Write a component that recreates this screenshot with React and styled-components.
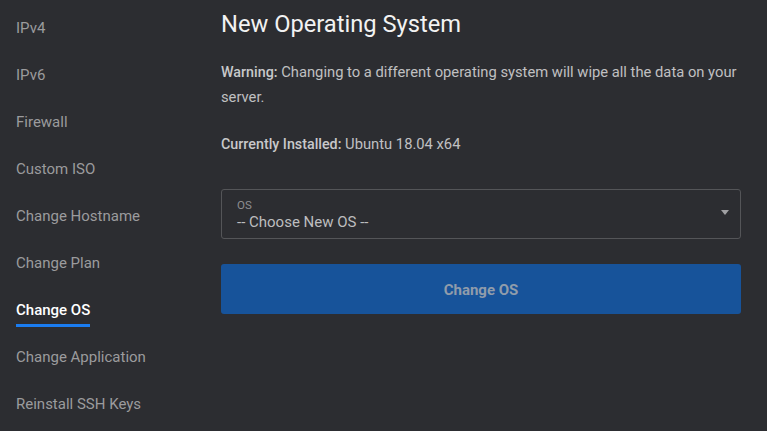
import React from "react";
import styled, { createGlobalStyle } from "styled-components";

const Global = createGlobalStyle`
  html, body { margin: 0; padding: 0; background: #2c2d31; }
  body { font-family: Roboto, "Noto Sans", sans-serif; -webkit-font-smoothing: antialiased; }
`;

const Page = styled.div`
  display: grid;
  grid-template-columns: 221px 520px;
  height: 431px;
  overflow: hidden;
  background: #2c2d31;
`;

const Sidebar = styled.nav`
  display: flex;
  flex-direction: column;
  padding-top: 4px;
  padding-left: 16px;
`;

const NavItem = styled.div`
  height: 47px;
  display: flex;
  align-items: center;
`;

const NavLabel = styled.span`
  font-size: 15px;
  line-height: 20px;
  color: ${(p) => (p.$active ? "#ffffff" : "#9b9b9d")};
  font-weight: ${(p) => (p.$active ? 500 : 400)};
  padding-top: 7px;
  padding-bottom: 4px;
  border-bottom: 3px solid ${(p) => (p.$active ? "#1a7cf0" : "transparent")};
`;

const Main = styled.main`
  display: flex;
  flex-direction: column;
`;

const Title = styled.h1`
  margin: 9px 0 0;
  font-size: 23.7px;
  line-height: 30px;
  font-weight: 400;
  color: #f2f2f2;
`;

const Para = styled.p`
  margin: ${(p) => p.$mt || 0} 0 0;
  font-size: 14.75px;
  line-height: 25px;
  color: #c0c0c2;
  b { font-size: 14.3px; font-weight: 500; color: #c8c8ca; }
`;

const Select = styled.div`
  margin-top: 32px;
  height: 48px;
  border: 1px solid #545558;
  border-radius: 3px;
  display: flex;
  align-items: center;
  justify-content: space-between;
  padding: 0 11px 0 15px;
`;

const SelectText = styled.div`
  display: flex;
  flex-direction: column;
  padding-top: 1px;
`;

const SelectLabel = styled.span`
  font-size: 11.5px;
  line-height: 14px;
  color: #8e8e91;
`;

const SelectValue = styled.span`
  font-size: 15px;
  line-height: 20px;
  color: #bdbdbf;
`;

const Caret = styled.span`
  width: 0;
  height: 0;
  border-left: 4px solid transparent;
  border-right: 4px solid transparent;
  border-top: 5px solid #a0a0a3;
  margin-top: -4px;
`;

const Button = styled.button`
  margin-top: 25px;
  height: 50px;
  border: 0;
  border-radius: 3px;
  background: #17539a;
  color: #909cab;
  font-family: inherit;
  font-size: 15px;
  font-weight: 700;
  padding: 2px 0 0;
`;

const items = [
  "IPv4",
  "IPv6",
  "Firewall",
  "Custom ISO",
  "Change Hostname",
  "Change Plan",
  "Change OS",
  "Change Application",
  "Reinstall SSH Keys",
];

export default function App() {
  return (
    <>
      <Global />
      <Page>
        <Sidebar>
          {items.map((it) => (
            <NavItem key={it}>
              <NavLabel $active={it === "Change OS"}>{it}</NavLabel>
            </NavItem>
          ))}
        </Sidebar>
        <Main>
          <Title>New Operating System</Title>
          <Para $mt="21px">
            <b>Warning:</b> Changing to a different operating system will wipe all the data on your server.
          </Para>
          <Para $mt="22px">
            <b>Currently Installed:</b> Ubuntu 18.04 x64
          </Para>
          <Select>
            <SelectText>
              <SelectLabel>OS</SelectLabel>
              <SelectValue>-- Choose New OS --</SelectValue>
            </SelectText>
            <Caret />
          </Select>
          <Button>Change OS</Button>
        </Main>
      </Page>
    </>
  );
}
